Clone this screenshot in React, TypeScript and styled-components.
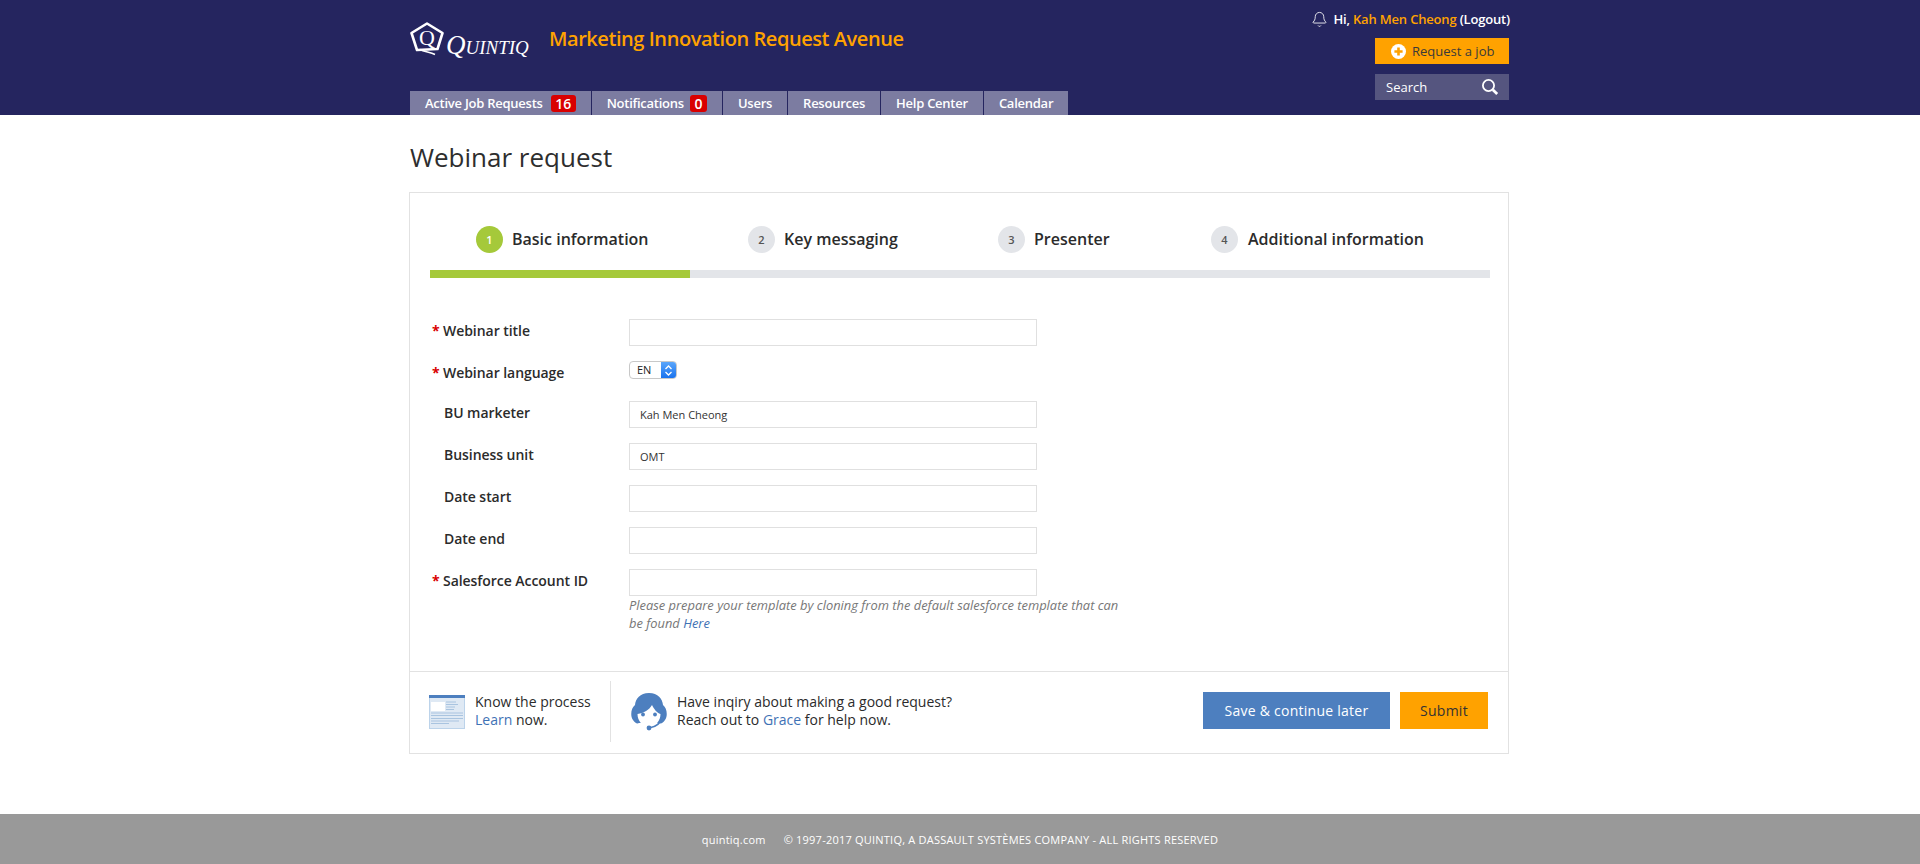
import React from "react";
import styled, { createGlobalStyle } from "styled-components";
import { Bell } from "lucide-react";

const Global = createGlobalStyle`
  html, body { margin: 0; padding: 0; background: #fff; }
  body { font-family: "Open Sans", "Liberation Sans", sans-serif; color: #2b2b2b; }
  * { box-sizing: border-box; }
`;

const Page = styled.div`
  min-height: 864px;
  display: flex;
  flex-direction: column;
`;
const Header = styled.header`
  height: 115px;
  background: #25255f;
`;
const Wrap = styled.div`
  width: 1100px;
  margin: 0 auto;
`;
const HeaderInner = styled(Wrap)`
  height: 115px;
  display: flex;
  justify-content: space-between;
`;
const HeaderLeft = styled.div`
  display: flex;
  flex-direction: column;
  justify-content: flex-end;
`;
const Brand = styled.div`
  display: flex;
  align-items: center;
  margin-bottom: 35px;
`;
const LogoBox = styled.div`
  display: flex;
  align-items: flex-end;
  width: 140px;
  color: #fff;
`;
const LogoWord = styled.span`
  font-family: "Liberation Serif", serif;
  font-style: italic;
  font-size: 27px;
  line-height: 24px;
  letter-spacing: 0;
  font-variant: small-caps;
  margin-left: 2px;
  margin-bottom: -1px;
`;
const LogoQ = styled.text`
  font-family: "Liberation Serif", serif;
  font-size: 22px;
  fill: #fff;
`;
const AppTitle = styled.div`
  color: #ffa200;
  font-size: 20px;
  font-weight: 600;
  letter-spacing: -0.44px;
  line-height: 28px;
  margin-left: -1px;
`;
const Tabs = styled.nav`
  display: flex;
  gap: 1px;
`;
const Tab = styled.div`
  height: 24px;
  padding: 0 15px;
  background: #7c7ca1;
  color: #fff;
  font-size: 13px;
  font-weight: 600;
  line-height: 24px;
  display: flex;
  align-items: center;
  white-space: nowrap;
  letter-spacing: -0.25px;
`;
const Badge = styled.span<{ $gap: number }>`
  background: #d90000;
  color: #fff;
  border-radius: 3px;
  height: 17px;
  line-height: 17px;
  padding: 0 4.5px;
  font-size: 14px;
  letter-spacing: 0;
  margin-left: ${(p) => p.$gap}px;
`;
const HeaderRight = styled.div`
  display: flex;
  flex-direction: column;
  align-items: flex-end;
  padding-top: 10px;
`;
const UserLine = styled.div`
  display: flex;
  align-items: center;
  color: #fff;
  font-size: 13px;
  font-weight: 600;
  line-height: 18px;
  letter-spacing: -0.18px;
  margin-bottom: 10px;
  gap: 5px;
`;
const UserName = styled.span`
  color: #ffa200;
`;
const RequestButton = styled.div`
  width: 134px;
  height: 26px;
  margin-right: 1px;
  background: #ffa200;
  color: #3a3a3a;
  font-size: 13px;
  display: flex;
  align-items: center;
  padding-left: 16px;
  gap: 6px;
  margin-bottom: 10px;
`;
const SearchBox = styled.div`
  width: 134px;
  height: 26px;
  margin-right: 1px;
  background: #55557f;
  color: #fff;
  font-size: 13px;
  display: flex;
  align-items: center;
  justify-content: space-between;
  padding: 0 10px 0 11px;
`;
const PageTitle = styled.h1`
  margin: 24px 0 17px;
  font-size: 26px;
  font-weight: 400;
  line-height: 36px;
  color: #2e2e2e;
`;
const Card = styled.section`
  border: 1px solid #e2e2e2;
  width: 1100px;
  height: 562px;
  margin-left: -1px;
  display: flex;
  flex-direction: column;
`;
const CardBody = styled.div`
  flex: 1;
  padding: 0 18px 0 20px;
`;
const Steps = styled.div`
  height: 77px;
  display: flex;
  align-items: flex-start;
  padding-top: 33px;
`;
const Step = styled.div<{ $w: number }>`
  width: ${(p) => p.$w}px;
  display: flex;
  align-items: center;
  gap: 9px;
  font-size: 16px;
  font-weight: 600;
  line-height: 27px;
  color: #2b2b2b;
`;
const StepLabel = styled.span<{ $shift?: number }>`
  margin-left: ${(p) => p.$shift ?? 0}px;
`;
const StepNum = styled.span<{ $on?: boolean }>`
  width: 27px;
  height: 27px;
  border-radius: 50%;
  background: ${(p) => (p.$on ? "#a5c93a" : "#e3e5e9")};
  color: ${(p) => (p.$on ? "#fff" : "#555")};
  font-size: 11px;
  font-weight: 600;
  display: flex;
  align-items: center;
  justify-content: center;
`;
const StepSpacer = styled.div`
  width: 46px;
`;
const Progress = styled.div`
  height: 8px;
  background: #e3e5e9;
`;
const ProgressFill = styled.div`
  width: 260px;
  height: 8px;
  background: #a5c93a;
`;
const Form = styled.div`
  padding-top: 41px;
  display: flex;
  flex-direction: column;
  gap: 15px;
  padding-left: 2px;
`;
const Row = styled.div<{ $short?: boolean }>`
  display: flex;
  min-height: ${(p) => (p.$short ? 25 : 27)}px;
`;
const Label = styled.label<{ $req?: boolean }>`
  width: 197px;
  padding-left: ${(p) => (p.$req ? 11 : 12)}px;
  font-size: 14px;
  font-weight: 600;
  line-height: 24px;
  color: #2b2b2b;
  position: relative;
  letter-spacing: -0.05px;
`;
const Star = styled.span`
  position: absolute;
  left: 0;
  top: 0;
  color: #d90000;
  font-weight: 700;
`;
const Field = styled.div`
  width: 495px;
`;
const Input = styled.input`
  display: block;
  width: 408px;
  height: 27px;
  border: 1px solid #e0e0e0;
  background: #fff;
  padding: 0 10px;
  font-family: inherit;
  font-size: 11px;
  color: #333;
  outline: none;
`;
const SelectBox = styled.div`
  width: 48px;
  height: 18px;
  border-radius: 4px;
  border: 1px solid #c8c8c8;
  display: flex;
  background: #fff;
  overflow: hidden;
  font-size: 11px;
  line-height: 16px;
  color: #222;
`;
const SelectText = styled.span`
  flex: 1;
  padding-left: 7px;
`;
const SelectArrow = styled.span`
  width: 15px;
  background: linear-gradient(#5aa6fb, #1a73ee);
  display: flex;
  align-items: center;
  justify-content: center;
`;
const Help = styled.div`
  font-size: 12.9px;
  font-style: italic;
  line-height: 18px;
  color: #777;
`;
const Link = styled.a`
  color: #3f72b5;
`;
const CardFooter = styled.div`
  height: 82px;
  border-top: 1px solid #e2e2e2;
  display: flex;
  align-items: center;
  padding: 0 20px 2px 19px;
`;
const InfoA = styled.div`
  width: 182px;
  height: 61px;
  border-right: 1px solid #e2e2e2;
  display: flex;
  align-items: center;
  gap: 10px;
`;
const InfoB = styled.div`
  flex: 1;
  display: flex;
  align-items: center;
  gap: 9px;
  padding-left: 20px;
`;
const InfoText = styled.div`
  font-size: 14px;
  line-height: 18px;
  color: #2b2b2b;
  margin-top: -2px;
`;
const Actions = styled.div`
  display: flex;
  gap: 10px;
  margin-bottom: 2px;
`;
const Btn = styled.div<{ $primary?: boolean; $w: number }>`
  width: ${(p) => p.$w}px;
  height: 37px;
  background: ${(p) => (p.$primary ? "#4d7fbf" : "#ffa200")};
  color: ${(p) => (p.$primary ? "#fff" : "#333")};
  font-size: 14px;
  font-weight: 500;
  letter-spacing: 0.25px;
  display: flex;
  align-items: center;
  justify-content: center;
`;
const Footer = styled.footer`
  margin-top: auto;
  height: 50px;
  background: #999;
  color: #fff;
  font-size: 11px;
  font-weight: 500;
  letter-spacing: 0.22px;
  display: flex;
  align-items: center;
  justify-content: center;
  gap: 18px;
  padding-top: 1px;
`;

const Logo = () => (
  <LogoBox>
    <svg width="34" height="34" viewBox="0 0 34 34" fill="none">
      <path d="M17 1.5 L32.5 11 L27.5 27 L7 28 L1.5 11 Z" stroke="#fff" strokeWidth="2.6" strokeLinejoin="round" />
      <LogoQ x="9" y="23">Q</LogoQ>
      <path d="M10 27.5 C14 30 20 30 25 32.5" stroke="#fff" strokeWidth="1.6" />
    </svg>
    <LogoWord>Quintiq</LogoWord>
  </LogoBox>
);

const SearchIcon = () => (
  <svg width="18" height="18" viewBox="0 0 18 18" fill="none">
    <circle cx="7.5" cy="7.5" r="5.6" stroke="#fff" strokeWidth="1.8" />
    <path d="M11.8 11.8 L16.2 16" stroke="#fff" strokeWidth="2.8" />
  </svg>
);

const PlusIcon = () => (
  <svg width="15" height="15" viewBox="0 0 15 15">
    <circle cx="7.5" cy="7.5" r="7.5" fill="#fff" />
    <path d="M3.4 7.5 H11.6 M7.5 3.4 V11.6" stroke="#ffa200" strokeWidth="2.6" />
  </svg>
);

const DocIcon = () => (
  <svg width="36" height="34" viewBox="0 0 36 34">
    <rect x="0.5" y="0.5" width="35" height="33" fill="#dfe9f4" stroke="#bcd3ea" />
    <rect width="36" height="3" fill="#4d7fbf" />
    <rect x="2" y="7" width="14" height="9" fill="#fff" />
    <path d="M17 7 H27 M17 9.5 H29 M17 12 H26 M17 14.5 H25" stroke="#a9c4e0" strokeWidth="1" />
    <path d="M2 18 H34 M2 20.5 H34 M2 23.5 H34 M2 26 H30 M2 28.5 H20" stroke="#a9c4e0" strokeWidth="1.2" />
  </svg>
);

const AgentIcon = () => (
  <svg width="37" height="38" viewBox="0 0 37 38">
    <path d="M18 0 C27 0 31.5 6 32 12 C36 15 37 23 34 27 C32 30 30 31 28 30 L8 30 C6 31 4 30 2 27 C-1 23 0 15 4 12 C4.5 6 9 0 18 0 Z" fill="#4d7fbf" />
    <path d="M6.5 21 C13 20 18 17 21 12 C23 16 26 20 29.5 21 C29.5 28 25 33 18 33 C11 33 6.5 28 6.5 21 Z" fill="#fff" />
    <circle cx="12" cy="21.5" r="1.9" fill="#4d7fbf" />
    <circle cx="24" cy="21.5" r="1.9" fill="#4d7fbf" />
    <path d="M30 26 C29 31 25 33.5 19 34.8" fill="none" stroke="#4d7fbf" strokeWidth="1.6" />
    <circle cx="18" cy="35" r="2.4" fill="#4d7fbf" />
  </svg>
);

const rows: { label: string; value?: string }[] = [
  { label: "BU marketer", value: "Kah Men Cheong" },
  { label: "Business unit", value: "OMT" },
  { label: "Date start" },
  { label: "Date end" },
];

export default function App() {
  return (
    <Page>
      <Global />
      <Header>
        <HeaderInner>
          <HeaderLeft>
            <Brand>
              <Logo />
              <AppTitle>Marketing Innovation Request Avenue</AppTitle>
            </Brand>
            <Tabs>
              <Tab>Active Job Requests<Badge $gap={8}>16</Badge></Tab>
              <Tab>Notifications<Badge $gap={6}>0</Badge></Tab>
              <Tab>Users</Tab>
              <Tab>Resources</Tab>
              <Tab>Help Center</Tab>
              <Tab>Calendar</Tab>
            </Tabs>
          </HeaderLeft>
          <HeaderRight>
            <UserLine>
              <Bell size={17} strokeWidth={1.2} />
              <span>Hi, <UserName>Kah Men Cheong</UserName> (Logout)</span>
            </UserLine>
            <RequestButton><PlusIcon />Request a job</RequestButton>
            <SearchBox>Search<SearchIcon /></SearchBox>
          </HeaderRight>
        </HeaderInner>
      </Header>
      <Wrap>
        <PageTitle>Webinar request</PageTitle>
        <Card>
          <CardBody>
            <Steps>
              <StepSpacer />
              <Step $w={272}><StepNum $on>1</StepNum><StepLabel>Basic information</StepLabel></Step>
              <Step $w={250}><StepNum>2</StepNum><StepLabel>Key messaging</StepLabel></Step>
              <Step $w={213}><StepNum>3</StepNum><StepLabel>Presenter</StepLabel></Step>
              <Step $w={240}><StepNum>4</StepNum><StepLabel $shift={1}>Additional information</StepLabel></Step>
            </Steps>
            <Progress><ProgressFill /></Progress>
            <Form>
              <Row>
                <Label $req><Star>*</Star>Webinar title</Label>
                <Field><Input readOnly /></Field>
              </Row>
              <Row $short>
                <Label $req><Star>*</Star>Webinar language</Label>
                <Field>
                  <SelectBox>
                    <SelectText>EN</SelectText>
                    <SelectArrow>
                      <svg width="9" height="13" viewBox="0 0 9 13" fill="none">
                        <path d="M1.5 5 L4.5 2 L7.5 5 M1.5 8 L4.5 11 L7.5 8" stroke="#fff" strokeWidth="1.3" />
                      </svg>
                    </SelectArrow>
                  </SelectBox>
                </Field>
              </Row>
              {rows.map((r) => (
                <Row key={r.label}>
                  <Label>{r.label}</Label>
                  <Field><Input readOnly value={r.value ?? ""} /></Field>
                </Row>
              ))}
              <Row>
                <Label $req><Star>*</Star>Salesforce Account ID</Label>
                <Field>
                  <Input readOnly />
                  <Help>
                    Please prepare your template by cloning from the default salesforce template that can be found <Link>Here</Link>
                  </Help>
                </Field>
              </Row>
            </Form>
          </CardBody>
          <CardFooter>
            <InfoA>
              <DocIcon />
              <InfoText>Know the process<br /><Link>Learn</Link> now.</InfoText>
            </InfoA>
            <InfoB>
              <AgentIcon />
              <InfoText>Have inqiry about making a good request?<br />Reach out to <Link>Grace</Link> for help now.</InfoText>
            </InfoB>
            <Actions>
              <Btn $primary $w={187}>Save &amp; continue later</Btn>
              <Btn $w={88}>Submit</Btn>
            </Actions>
          </CardFooter>
        </Card>
      </Wrap>
      <Footer>
        <span>quintiq.com</span>
        <span>© 1997-2017 QUINTIQ, A DASSAULT SYSTÈMES COMPANY - ALL RIGHTS RESERVED</span>
      </Footer>
    </Page>
  );
}
